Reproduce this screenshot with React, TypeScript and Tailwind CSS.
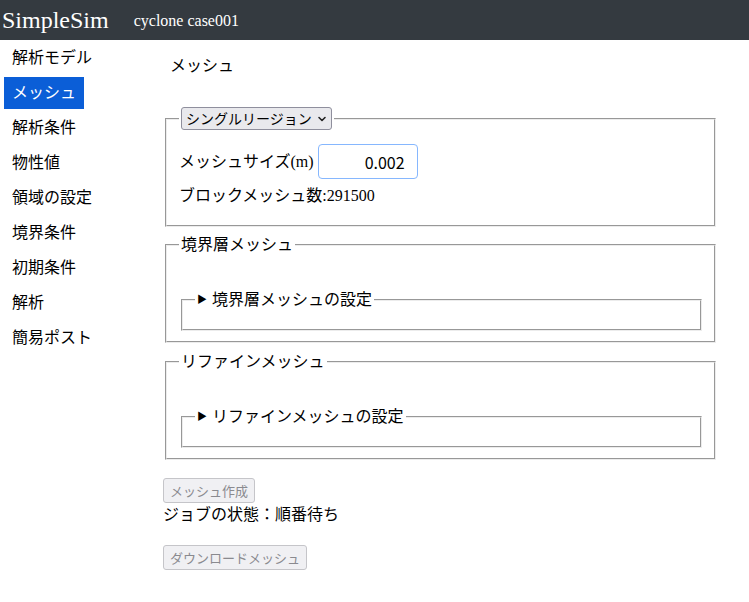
import React from "react";

const jp = { fontFamily: '"Liberation Serif", "Noto Sans CJK JP", serif' } as React.CSSProperties;

function Chevron() {
  return (
    <svg width="10" height="10" viewBox="0 0 10 10" className="ml-[5px]">
      <path d="M2 3.5 L5 6.5 L8 3.5" fill="none" stroke="#222" strokeWidth="1.6" strokeLinecap="round" strokeLinejoin="round" />
    </svg>
  );
}

function Detail({ label }: { label: string }) {
  return (
    <fieldset className="ml-[2px] mr-0 border-2 [border-style:groove] border-[#ececec] px-3 pb-[17px] min-w-0">
      <legend className="px-[2px] flex items-center text-[16px] leading-[24px]">
        <span className="text-[10px] mr-[5px]">▶</span>
        <span>{label}</span>
      </legend>
    </fieldset>
  );
}

export default function App() {
  const items = ["解析モデル", "メッシュ", "解析条件", "物性値", "領域の設定", "境界条件", "初期条件", "解析", "簡易ポスト"];
  return (
    <div className="w-[749px] h-[602px] bg-white text-black overflow-hidden" style={jp}>
      <header className="h-10 bg-[#343a40] flex items-center text-white" style={{ fontFamily: '"Liberation Serif", serif' }}>
        <span className="ml-[2px] text-[24px] leading-none">SimpleSim</span>
        <span className="ml-[25px] text-[16px] leading-none mt-[2px]">cyclone case001</span>
      </header>
      <div className="flex">
        <nav className="w-[163px] shrink-0 pt-[2px] pl-[4px] flex flex-col gap-[3px]">
          {items.map((t) => (
            <div
              key={t}
              className={
                "h-8 px-2 flex items-center text-[16px] w-fit " +
                (t === "メッシュ" ? "bg-[#0b5ed7] text-white" : "")
              }
            >
              {t}
            </div>
          ))}
        </nav>
        <main className="flex-1 pr-[31px]">
          <div className="pl-[7px] pt-[14px] text-[16px] leading-[24px]">メッシュ</div>
          <fieldset className="mt-[29px] mx-[2px] border-2 [border-style:groove] border-[#ececec] pl-3 pr-3 pb-[17px] min-w-0">
            <legend className="px-[2px]">
              <div className="h-[23px] pl-[4px] pr-[4px] flex items-center bg-[#e9e9ed] border border-[#8f8f9d] rounded-[3px] text-[14px]" style={{ fontFamily: '"Noto Sans CJK JP", sans-serif' }}>
                シングルリージョン
                <Chevron />
              </div>
            </legend>
            <div className="flex items-center mt-[14px]">
              <span className="text-[16px]">メッシュサイズ(m)</span>
              <div className="ml-[4px] w-[100px] h-[35px] border border-[#86b7fe] rounded-[4px] flex items-center justify-end pr-[12px] text-[16px]" style={{ fontFamily: '"Noto Sans CJK JP", sans-serif' }}>
                0.002
              </div>
            </div>
            <div className="text-[16px] leading-[24px] mt-[5px]">ブロックメッシュ数:291500</div>
          </fieldset>
          <fieldset className="mt-[6px] mx-[2px] border-2 [border-style:groove] border-[#ececec] px-3 pb-[10px] min-w-0">
            <legend className="px-[2px] text-[16px] leading-[24px]">境界層メッシュ</legend>
            <div className="h-[31px]" />
            <Detail label="境界層メッシュの設定" />
          </fieldset>
          <fieldset className="mt-[7px] mx-[2px] border-2 [border-style:groove] border-[#ececec] px-3 pb-[10px] min-w-0">
            <legend className="px-[2px] text-[16px] leading-[24px]">リファインメッシュ</legend>
            <div className="h-[31px]" />
            <Detail label="リファインメッシュの設定" />
          </fieldset>
          <div className="mt-[18px] flex">
            <div className="inline-flex h-[25px] items-center px-[6px] bg-[#f0f0f3] border border-[#c5c5c9] rounded-[3px] text-[13px] text-[#8a8a8f]" style={{ fontFamily: '"Noto Sans CJK JP", sans-serif' }}>
              メッシュ作成
            </div>
          </div>
          <div className="text-[16px] leading-[24px]">ジョブの状態：順番待ち</div>
          <div className="mt-[18px] flex">
            <div className="inline-flex h-[25px] items-center px-[6px] bg-[#f0f0f3] border border-[#c5c5c9] rounded-[3px] text-[13px] text-[#8a8a8f]" style={{ fontFamily: '"Noto Sans CJK JP", sans-serif' }}>
              ダウンロードメッシュ
            </div>
          </div>
        </main>
      </div>
    </div>
  );
}
